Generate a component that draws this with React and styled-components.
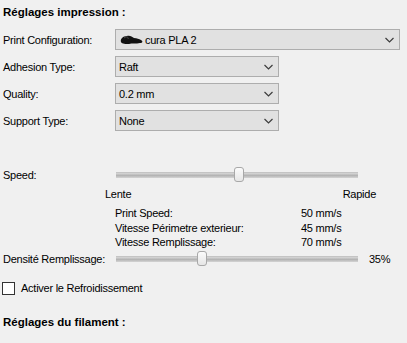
import React from 'react';
import styled, { createGlobalStyle } from 'styled-components';

const GlobalStyle = createGlobalStyle`
    html, body {
        margin: 0;
        padding: 0;
        background: #f0f0f0;
    }
    body {
        font-family: "Liberation Sans", Arial, sans-serif;
        font-size: 11px;
        letter-spacing: -0.25px;
        color: #000;
    }
`;

const Panel = styled.div`
    width: 407px;
    height: 343px;
    padding: 5px 0 0 3px;
    box-sizing: border-box;
    display: flex;
    flex-direction: column;
`;

const SectionTitle = styled.div`
    font-weight: bold;
    font-size: 11.5px;
    letter-spacing: 0;
    height: 14px;
    line-height: 14px;
    margin-top: ${props => props.top || 0}px;
`;

const Form = styled.div`
    display: flex;
    flex-direction: column;
    gap: 6px;
    margin-top: 10px;
`;

const Row = styled.div`
    display: flex;
    align-items: center;
    height: ${props => props.height || 21}px;
    margin-top: ${props => props.top || 0}px;
`;

const Label = styled.div`
    width: ${props => props.width || 112}px;
    flex-shrink: 0;
`;

const Select = styled.div`
    width: ${props => props.width}px;
    height: 21px;
    box-sizing: border-box;
    border: 1px solid #adadad;
    background: #e1e1e1;
    display: flex;
    align-items: center;
    justify-content: space-between;
    padding: 0 5px 0 3px;
`;

const SelectText = styled.span`
    display: flex;
    align-items: center;
    gap: 1px;
`;

const Chevron = () => (
    <svg width="9" height="6" viewBox="0 0 9 6">
        <path d="M0.5 1 L4.5 5 L8.5 1" fill="none" stroke="#3c3c3c" strokeWidth="1.2" />
    </svg>
);

const Blob = () => (
    <svg width="25" height="11" viewBox="0 0 25 11">
        <path
            d="M2 8 C1 5 4 2 8 2 C11 1 13 3 15 4 C18 4 20 5 22 6 C24 7 24 9 21 9 C17 10 13 9 10 10 C7 10 3 10 2 8 Z"
            fill="#111"
        />
        <path d="M5 4 C7 2 10 3 9 5" fill="none" stroke="#555" strokeWidth="0.8" />
    </svg>
);

const SliderTrack = styled.div`
    position: relative;
    width: 242px;
    height: 5px;
    background: linear-gradient(#d8d8d8, #b4b4b4 50%, #d4d4d4);
    border-top: 1px solid #c4c4c4;
`;

const Thumb = styled.div`
    position: absolute;
    top: -6px;
    width: 10px;
    height: 15px;
    box-sizing: border-box;
    border: 1px solid #a8a8a8;
    border-radius: 3px;
    background: linear-gradient(#fbfbfb, #e6e6e6);
`;

const Slider = ({ value }) => (
    <SliderTrack>
        <Thumb style={{ left: `${Math.round(value * 232)}px` }} />
    </SliderTrack>
);

const SliderBox = styled.div`
    padding-left: 1px;
`;

const Scale = styled.div`
    display: flex;
    justify-content: space-between;
    width: 271px;
    margin: 5px 0 0 102px;
    line-height: 13px;
`;

const Stats = styled.div`
    display: grid;
    grid-template-columns: 186px auto;
    row-gap: 1px;
    margin: 6px 0 0 112px;
    line-height: 13.5px;
`;

const Percent = styled.div`
    margin-left: 11px;
`;

const CheckRow = styled.label`
    display: flex;
    align-items: center;
    gap: 6px;
    margin-top: 14px;
    height: 15px;
`;

const CheckBox = styled.span`
    width: 13px;
    height: 13px;
    box-sizing: border-box;
    border: 1px solid #333;
    background: #fff;
    margin-left: -1px;
`;

const App = () => (
    <>
        <GlobalStyle />
        <Panel>
            <SectionTitle>Réglages impression :</SectionTitle>
            <Form>
                <Row>
                    <Label>Print Configuration:</Label>
                    <Select width={285}>
                        <SelectText><Blob />cura PLA 2</SelectText>
                        <Chevron />
                    </Select>
                </Row>
                <Row>
                    <Label>Adhesion Type:</Label>
                    <Select width={164}>
                        <SelectText>Raft</SelectText>
                        <Chevron />
                    </Select>
                </Row>
                <Row>
                    <Label>Quality:</Label>
                    <Select width={164}>
                        <SelectText>0.2 mm</SelectText>
                        <Chevron />
                    </Select>
                </Row>
                <Row>
                    <Label>Support Type:</Label>
                    <Select width={164}>
                        <SelectText>None</SelectText>
                        <Chevron />
                    </Select>
                </Row>
            </Form>
            <Row top={36} height={16}>
                <Label>Speed:</Label>
                <SliderBox><Slider value={0.51} /></SliderBox>
            </Row>
            <Scale>
                <span>Lente</span>
                <span>Rapide</span>
            </Scale>
            <Stats>
                <span>Print Speed:</span>
                <span>50 mm/s</span>
                <span>Vitesse Périmetre exterieur:</span>
                <span>45 mm/s</span>
                <span>Vitesse Remplissage:</span>
                <span>70 mm/s</span>
            </Stats>
            <Row top={1} height={16}>
                <Label>Densité Remplissage:</Label>
                <SliderBox><Slider value={0.35} /></SliderBox>
                <Percent>35%</Percent>
            </Row>
            <CheckRow>
                <CheckBox />
                <span>Activer le Refroidissement</span>
            </CheckRow>
            <SectionTitle top={19}>Réglages du filament :</SectionTitle>
        </Panel>
    </>
);

export default App;
